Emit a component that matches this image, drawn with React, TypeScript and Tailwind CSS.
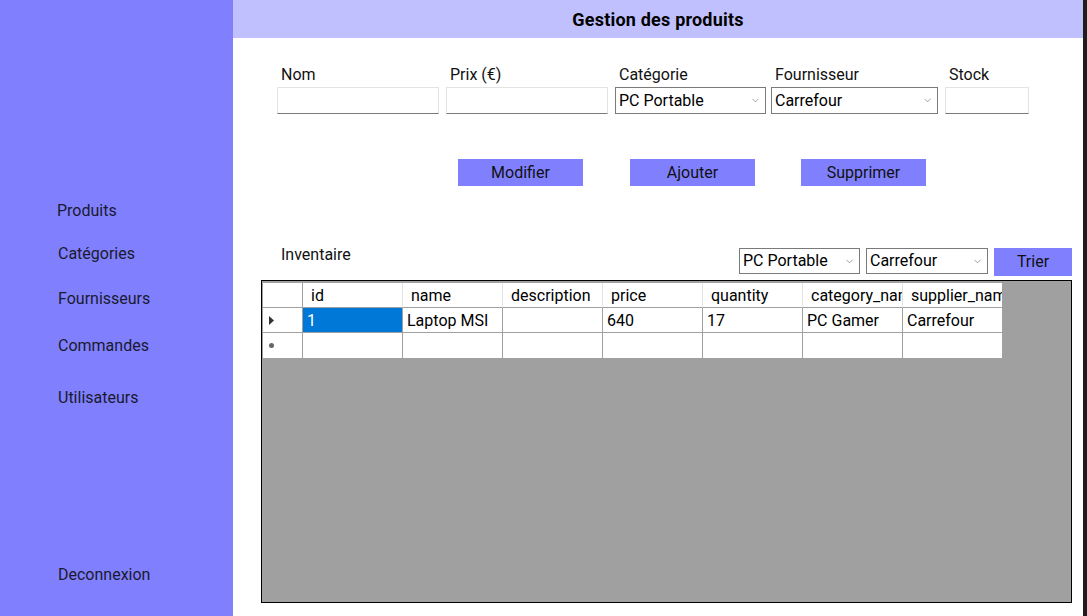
import {ChevronDown} from "lucide-react";

const font = "font-['Roboto','Liberation_Sans',sans-serif]";

const Field: React.FC<{label: string; width: string; children: React.ReactNode}> = ({label, width, children}) => (
	<div className={`flex flex-col ${width}`}>
		<span className="pl-[4px] h-[26px] leading-[28px] text-[16px] text-[#111]">{label}</span>
		{children}
	</div>
);

const TextBox: React.FC = () => (
	<div className="h-[27px] bg-white border border-[#e3e3e3] border-b-[#7a7a7a]" />
);

const Select: React.FC<{value: string; className?: string}> = ({value, className}) => (
	<div className={`flex items-center justify-between bg-white border border-[#7a7a7a] pl-[3px] pr-[4px] text-[16px] text-black ${className ?? "h-[27px]"}`}>
		<span className="leading-none">{value}</span>
		<ChevronDown className="w-[11px] h-[11px] text-[#777]" strokeWidth={1.5} />
	</div>
);

const Action: React.FC<{label: string}> = ({label}) => (
	<button className="w-[125px] h-[27px] bg-[#8080ff] text-[16px] text-[#111]">{label}</button>
);

const columns = ["id", "name", "description", "price", "quantity", "category_name", "supplier_name"];
const row = ["1", "Laptop MSI", "", "640", "17", "PC Gamer", "Carrefour"];

export default function App() {
	return (
		<div className={`flex w-[1087px] h-[616px] overflow-hidden bg-white ${font}`}>
			<aside className="w-[233px] shrink-0 bg-[#8080ff] flex flex-col pl-[57px] text-[16px] text-[#1a1a2e]">
				<span className="mt-[201px] leading-[20px]">Produits</span>
				<span className="mt-[23px] leading-[20px] pl-px">Catégories</span>
				<span className="mt-[25px] leading-[20px] pl-px">Fournisseurs</span>
				<span className="mt-[27px] leading-[20px] pl-px">Commandes</span>
				<span className="mt-[32px] leading-[20px] pl-px">Utilisateurs</span>
				<span className="mt-[157px] leading-[20px] pl-px">Deconnexion</span>
			</aside>

			<main className="w-[850px] shrink-0 flex flex-col">
				<header className="h-[38px] bg-[#c0c0ff] flex items-center justify-center">
					<h1 className="text-[18px] font-bold tracking-[0.2px] text-black">Gestion des produits</h1>
				</header>

				<div className="flex gap-[7px] pl-[44px] pt-[23px]">
					<Field label="Nom" width="w-[162px]">
						<TextBox />
					</Field>
					<Field label="Prix (€)" width="w-[162px]">
						<TextBox />
					</Field>
					<Field label="Catégorie" width="w-[151px]">
						<Select value="PC Portable" />
					</Field>
					<div className="-ml-[2px]">
						<Field label="Fournisseur" width="w-[167px]">
							<Select value="Carrefour" />
						</Field>
					</div>
					<Field label="Stock" width="w-[84px]">
						<TextBox />
					</Field>
				</div>

				<div className="flex gap-[47px] pl-[225px] mt-[45px]">
					<Action label="Modifier" />
					<Action label="Ajouter" />
					<div className="-ml-[1px]">
						<Action label="Supprimer" />
					</div>
				</div>

				<div className="flex items-start mt-[62px] pl-[28px] pr-[11px]">
					<span className="pl-[20px] text-[16px] text-[#111] leading-[20px] mt-[-3px]">Inventaire</span>
					<div className="ml-auto flex gap-[6px]">
						<Select value="PC Portable" className="w-[121px] h-[26px]" />
						<Select value="Carrefour" className="w-[122px] h-[26px]" />
						<button className="w-[78px] h-[28px] bg-[#8080ff] text-[16px] text-[#111]">Trier</button>
					</div>
				</div>

				<div className="ml-[28px] mt-[4px] w-[811px] h-[323px] border border-black bg-[#a0a0a0] pt-[2px] pl-px text-[16px] text-black">
					<div className="flex w-fit bg-white">
						<div className="w-[40px] h-[25px] border-r border-b border-[#a0a0a0]" />
						{columns.map((c, i) => (
							<div
								key={c}
								className={`h-[25px] border-b border-[#a0a0a0] px-[8px] leading-[25px] overflow-hidden whitespace-nowrap ${i === 6 ? "w-[99px]" : "w-[100px] border-r border-r-[#e3e3e3]"}`}
							>
								{c}
							</div>
						))}
					</div>
					<div className="flex w-fit bg-white">
						<div className="w-[40px] h-[25px] border-r border-b border-[#a0a0a0] flex items-center pl-[6px]">
							<svg width="5" height="9" viewBox="0 0 5 9">
								<path d="M0 0 L5 4.5 L0 9 Z" fill="#333" />
							</svg>
						</div>
						{row.map((v, i) => (
							<div
								key={i}
								className={`h-[25px] border-b border-[#a0a0a0] px-[4px] leading-[25px] overflow-hidden whitespace-nowrap ${i === 6 ? "w-[99px]" : "w-[100px] border-r"} ${i === 0 ? "bg-[#0078d7] text-white" : ""}`}
							>
								{v}
							</div>
						))}
					</div>
					<div className="flex w-fit bg-white">
						<div className="w-[40px] h-[25px] border-r border-[#a0a0a0] flex items-center pl-[6px]">
							<span className="w-[5px] h-[5px] rounded-full bg-[#666] block" />
						</div>
						{row.map((_, i) => (
							<div key={i} className={`h-[25px] ${i === 6 ? "w-[99px]" : "w-[100px] border-r border-[#a0a0a0]"}`} />
						))}
					</div>
				</div>
			</main>

			<div className="flex-1 bg-[#1e1e1e]" />
		</div>
	);
}
